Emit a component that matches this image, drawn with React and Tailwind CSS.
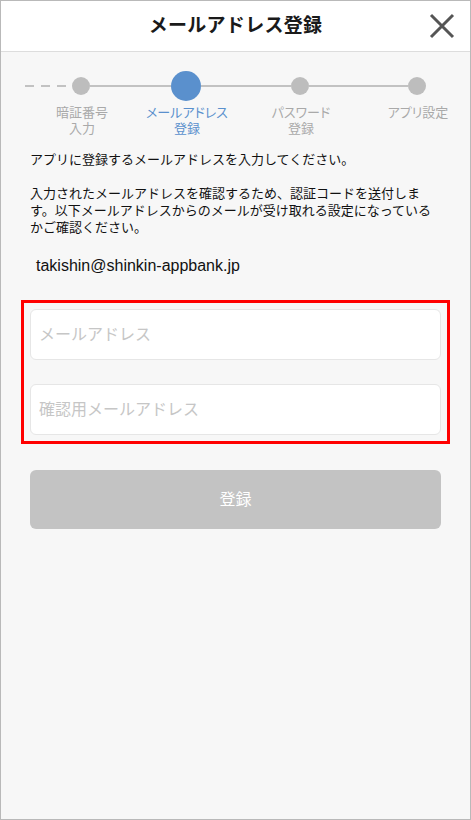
import React from 'react'

const steps = [
  { label: ['暗証番号', '入力'], active: false },
  { label: ['メールアドレス', '登録'], active: true },
  { label: ['パスワード', '登録'], active: false },
  { label: ['アプリ設定'], active: false },
]

function CloseIcon() {
  return (
    <svg width="26" height="26" viewBox="0 0 26 26" fill="none">
      <path d="M2 2 L24 24 M24 2 L2 24" stroke="#555555" strokeWidth="3" />
    </svg>
  )
}

function StepLabel({ step, className }) {
  return (
    <div
      className={`w-[80px] flex flex-col items-center text-[13px] leading-[16px] [font-feature-settings:'palt'] ${
        step.active ? 'text-[#5a90cd]' : 'text-[#a9a9a9]'
      } ${className || ''}`}
    >
      {step.label.map((l) => (
        <span key={l} className="whitespace-nowrap">{l}</span>
      ))}
    </div>
  )
}

export default function App() {
  return (
    <div className="w-[471px] h-[820px] border border-[#b9b9b9] bg-[#f7f7f7] flex flex-col font-['Liberation_Sans','Noto_Sans_CJK_JP',sans-serif] overflow-hidden">
      {/* Header */}
      <div className="relative h-[51px] shrink-0 bg-white border-b border-[#dddddd] flex items-center justify-center">
        <h1 className="text-[19px] font-bold text-[#1a1a1a] tracking-[0.3px]">メールアドレス登録</h1>
        <button className="absolute right-[15px] top-[12px]">
          <CloseIcon />
        </button>
      </div>

      {/* Step indicator */}
      <div className="mt-[19px] h-[30px] flex items-center">
        <div className="ml-[24px] w-[9px] h-[2px] bg-[#c2c2c2]" />
        <div className="ml-[7px] w-[9px] h-[2px] bg-[#c2c2c2]" />
        <div className="ml-[7px] w-[9px] h-[2px] bg-[#c2c2c2]" />
        <div className="ml-[6px] w-[18px] h-[18px] rounded-full bg-[#bdbdbd]" />
        <div className="w-[81px] h-[2px] bg-[#c2c2c2]" />
        <div className="w-[30px] h-[30px] rounded-full bg-[#5a90cd]" />
        <div className="w-[90px] h-[2px] bg-[#c2c2c2]" />
        <div className="w-[18px] h-[18px] rounded-full bg-[#bdbdbd]" />
        <div className="w-[99px] h-[2px] bg-[#c2c2c2]" />
        <div className="w-[18px] h-[18px] rounded-full bg-[#bdbdbd]" />
      </div>
      <div className="mt-[4px] flex">
        <StepLabel step={steps[0]} className="ml-[41px]" />
        <StepLabel step={steps[1]} className="ml-[25px]" />
        <StepLabel step={steps[2]} className="ml-[34px]" />
        <StepLabel step={steps[3]} className="ml-[37px]" />
      </div>

      {/* Description */}
      <div className="mt-[14px] pl-[29px] text-[13px] leading-[17px] text-[#111111]">
        <p>アプリに登録するメールアドレスを入力してください。</p>
        <p className="mt-[17px]">
          入力されたメールアドレスを確認するため、認証コードを送付しま
          <br />
          す。以下メールアドレスからのメールが受け取れる設定になっている
          <br />
          かご確認ください。
        </p>
      </div>

      <div className="mt-[20px] pl-[35px] text-[16px] leading-[20px] text-[#111111]">
        takishin@shinkin-appbank.jp
      </div>

      {/* Inputs */}
      <div className="mt-[24px] ml-[20px] w-[429px] border-[3px] border-[#ff0000] p-[6px] flex flex-col gap-[24px]">
        <input
          type="email"
          placeholder="メールアドレス"
          className="h-[51px] w-full rounded-[6px] border border-[#e6e6e6] bg-white pl-[8px] text-[16px] outline-none placeholder:text-[#c6c6c6]"
        />
        <input
          type="email"
          placeholder="確認用メールアドレス"
          className="h-[51px] w-full rounded-[6px] border border-[#e6e6e6] bg-white pl-[8px] text-[16px] outline-none placeholder:text-[#c6c6c6]"
        />
      </div>

      {/* Submit */}
      <button
        disabled
        className="mt-[26px] ml-[29px] w-[411px] h-[59px] rounded-[6px] bg-[#c3c3c3] text-white text-[16px]"
      >
        登録
      </button>
    </div>
  )
}
